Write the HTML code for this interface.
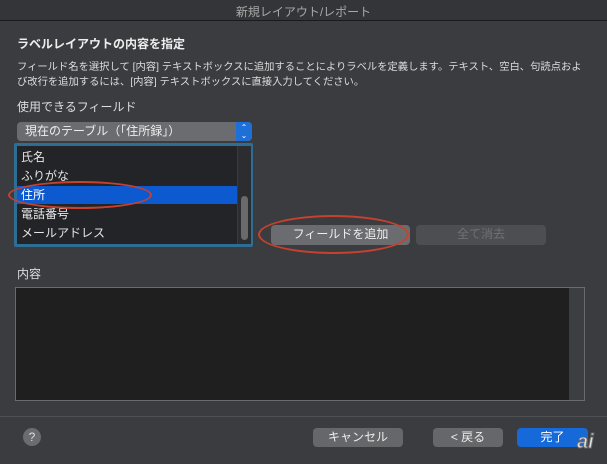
<!DOCTYPE html>
<html><head><meta charset="utf-8"><style>
*{margin:0;padding:0;box-sizing:border-box}
body{width:607px;height:464px;background:#3a3c40;font-family:"Liberation Sans","Noto Sans CJK JP",sans-serif;color:#e6e6e6;position:relative;overflow:hidden}
.a{position:absolute;white-space:nowrap}
.btn{position:absolute;background:#65676a;border-radius:4px;color:#eee;font-size:12px;text-align:center;line-height:19px}
</style></head><body>
<div class="a" style="left:0;top:0;width:607px;height:21px;background:#333538;border-bottom:1px solid #1a1a1a"></div>
<div class="a" style="left:0;top:3px;width:607px;text-align:center;font-size:12px;color:#a8a8a8">新規レイアウト/レポート</div>
<div class="a" style="left:17px;top:35px;font-size:12px;font-weight:bold;color:#eee">ラベルレイアウトの内容を指定</div>
<div class="a" style="left:17px;top:60px;font-size:10.3px;line-height:15px;color:#ddd">フィールド名を選択して [内容] テキストボックスに追加することによりラベルを定義します。テキスト、空白、句読点およ<br>び改行を追加するには、[内容] テキストボックスに直接入力してください。</div>
<div class="a" style="left:17px;top:98px;font-size:12px;color:#ddd">使用できるフィールド</div>
<div class="a" style="left:17px;top:122px;width:235px;height:19px;background:#6a6c6f;border-radius:4px;font-size:12px;line-height:19px;padding-left:8px;color:#eee">現在のテーブル（「住所録」）</div>
<div class="a" style="left:236px;top:122px;width:16px;height:19px;background:#1f6fd8;border-radius:0 4px 4px 0;color:#fff;font-size:8px;line-height:8px;text-align:center;padding-top:2px">⌃<br>⌄</div>
<div class="a" style="left:14px;top:143px;width:239px;height:104px;border:3px solid #2e6e94;background:#232427;border-radius:2px"></div>
<div class="a" style="left:237px;top:146px;width:14px;height:98px;background:#2c2d30;border-left:1px solid #3a3a3a"></div>
<div class="a" style="left:241px;top:196px;width:7px;height:44px;background:#6a6a6a;border-radius:4px"></div>
<div class="a" style="left:17px;top:186px;width:220px;height:18px;background:#0d5ad0"></div>
<div class="a" style="left:21px;top:148px;font-size:12px;line-height:19px;color:#e6e6e6">氏名<br>ふりがな<br><span style="color:#fff">住所</span><br>電話番号<br>メールアドレス</div>
<div class="a" style="left:8px;top:181px;width:144px;height:28px;border:2px solid #c8412e;border-radius:50%"></div>
<div class="btn" style="left:271px;top:225px;width:139px;height:20px;background:#6a6c6f">フィールドを追加</div>
<div class="btn" style="left:416px;top:225px;width:130px;height:20px;background:#4c4e51;color:#6f7174">全て消去</div>
<div class="a" style="left:258px;top:215px;width:151px;height:39px;border:2px solid #c8412e;border-radius:50%"></div>
<div class="a" style="left:17px;top:265px;font-size:12px;color:#ddd">内容</div>
<div class="a" style="left:15px;top:287px;width:570px;height:114px;border:1px solid #6a6a6a;background:#1f1f20"></div>
<div class="a" style="left:569px;top:288px;width:15px;height:112px;background:#3c3e41"></div>
<div class="a" style="left:0;top:416px;width:607px;height:1px;background:#4e5054"></div>
<div class="a" style="left:23px;top:428px;width:18px;height:18px;border-radius:50%;background:#6a6c6f;color:#ddd;font-size:12px;text-align:center;line-height:18px">?</div>
<div class="btn" style="left:313px;top:428px;width:90px;height:19px">キャンセル</div>
<div class="btn" style="left:433px;top:428px;width:70px;height:19px">&lt; 戻る</div>
<div class="btn" style="left:517px;top:428px;width:71px;height:19px;background:#1669d8;color:#fff">完了</div>
<div class="a" style="left:577px;top:431px;font-size:20px;font-style:italic;font-weight:bold;color:#ddd;-webkit-text-stroke:1px #666">ai</div>
</body></html>
